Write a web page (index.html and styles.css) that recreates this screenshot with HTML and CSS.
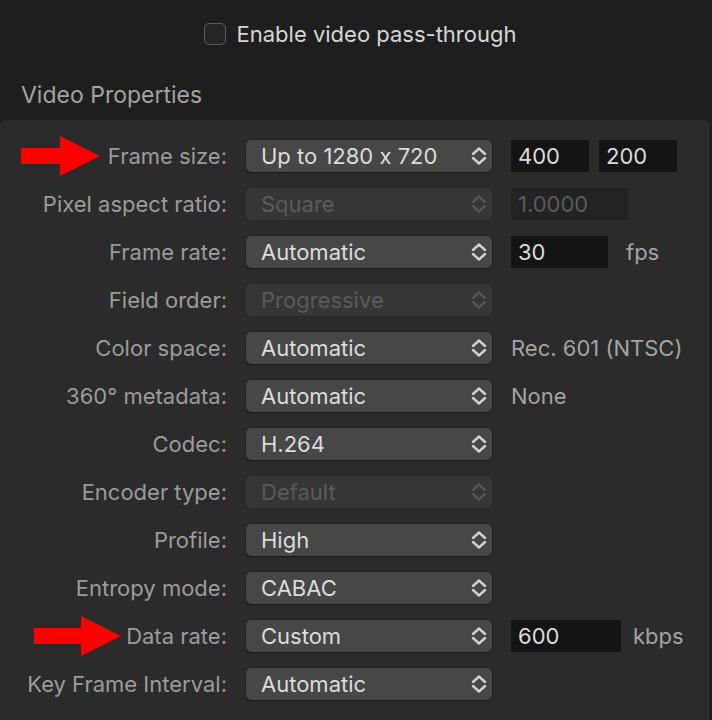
FILE: index.html
```html
<!DOCTYPE html>
<html lang="en">
<head>
  <meta charset="UTF-8">
  <title>Video Properties</title>
  <link rel="stylesheet" href="styles.css">
</head>
<body>
  <div class="passthrough">
    <span class="checkbox"></span>
    <span class="passthrough-label">Enable video pass-through</span>
  </div>
  <div class="section-title">Video Properties</div>
  <div class="panel">
    <div class="form">
      <div class="label">
        <svg class="arrow arrow-frame" width="80" height="40" viewBox="0 0 80 40"><path d="M0 12 H39 V0 L79 20 L39 40 V28 H0 Z" fill="#ff0000"/></svg>
        Frame size:
      </div>
      <div class="popup">Up to 1280 x 720<svg class="chev" width="16" height="20" viewBox="0 0 16 20"><path d="M2 8 L8 2.5 L14 8 M2 12 L8 17.5 L14 12" fill="none" stroke="currentColor" stroke-width="2.4" stroke-linecap="round" stroke-linejoin="round"/></svg></div>
      <div class="extra"><span class="field w78">400</span><span class="field w78">200</span></div>

      <div class="label">Pixel aspect ratio:</div>
      <div class="popup disabled">Square<svg class="chev" width="16" height="20" viewBox="0 0 16 20"><path d="M2 8 L8 2.5 L14 8 M2 12 L8 17.5 L14 12" fill="none" stroke="currentColor" stroke-width="2.4" stroke-linecap="round" stroke-linejoin="round"/></svg></div>
      <div class="extra"><span class="field disabled w117">1.0000</span></div>

      <div class="label">Frame rate:</div>
      <div class="popup">Automatic<svg class="chev" width="16" height="20" viewBox="0 0 16 20"><path d="M2 8 L8 2.5 L14 8 M2 12 L8 17.5 L14 12" fill="none" stroke="currentColor" stroke-width="2.4" stroke-linecap="round" stroke-linejoin="round"/></svg></div>
      <div class="extra"><span class="field w97">30</span><span class="unit fps">fps</span></div>

      <div class="label">Field order:</div>
      <div class="popup disabled">Progressive<svg class="chev" width="16" height="20" viewBox="0 0 16 20"><path d="M2 8 L8 2.5 L14 8 M2 12 L8 17.5 L14 12" fill="none" stroke="currentColor" stroke-width="2.4" stroke-linecap="round" stroke-linejoin="round"/></svg></div>
      <div class="extra"></div>

      <div class="label">Color space:</div>
      <div class="popup">Automatic<svg class="chev" width="16" height="20" viewBox="0 0 16 20"><path d="M2 8 L8 2.5 L14 8 M2 12 L8 17.5 L14 12" fill="none" stroke="currentColor" stroke-width="2.4" stroke-linecap="round" stroke-linejoin="round"/></svg></div>
      <div class="extra"><span class="note">Rec. 601 (NTSC)</span></div>

      <div class="label">360° metadata:</div>
      <div class="popup">Automatic<svg class="chev" width="16" height="20" viewBox="0 0 16 20"><path d="M2 8 L8 2.5 L14 8 M2 12 L8 17.5 L14 12" fill="none" stroke="currentColor" stroke-width="2.4" stroke-linecap="round" stroke-linejoin="round"/></svg></div>
      <div class="extra"><span class="note">None</span></div>

      <div class="label">Codec:</div>
      <div class="popup">H.264<svg class="chev" width="16" height="20" viewBox="0 0 16 20"><path d="M2 8 L8 2.5 L14 8 M2 12 L8 17.5 L14 12" fill="none" stroke="currentColor" stroke-width="2.4" stroke-linecap="round" stroke-linejoin="round"/></svg></div>
      <div class="extra"></div>

      <div class="label">Encoder type:</div>
      <div class="popup disabled">Default<svg class="chev" width="16" height="20" viewBox="0 0 16 20"><path d="M2 8 L8 2.5 L14 8 M2 12 L8 17.5 L14 12" fill="none" stroke="currentColor" stroke-width="2.4" stroke-linecap="round" stroke-linejoin="round"/></svg></div>
      <div class="extra"></div>

      <div class="label">Profile:</div>
      <div class="popup">High<svg class="chev" width="16" height="20" viewBox="0 0 16 20"><path d="M2 8 L8 2.5 L14 8 M2 12 L8 17.5 L14 12" fill="none" stroke="currentColor" stroke-width="2.4" stroke-linecap="round" stroke-linejoin="round"/></svg></div>
      <div class="extra"></div>

      <div class="label">Entropy mode:</div>
      <div class="popup">CABAC<svg class="chev" width="16" height="20" viewBox="0 0 16 20"><path d="M2 8 L8 2.5 L14 8 M2 12 L8 17.5 L14 12" fill="none" stroke="currentColor" stroke-width="2.4" stroke-linecap="round" stroke-linejoin="round"/></svg></div>
      <div class="extra"></div>

      <div class="label">
        <svg class="arrow arrow-rate" width="87" height="40" viewBox="0 0 87 40"><path d="M0 12 H47 V0 L87 20 L47 40 V28 H0 Z" fill="#ff0000"/></svg>
        Data rate:
      </div>
      <div class="popup">Custom<svg class="chev" width="16" height="20" viewBox="0 0 16 20"><path d="M2 8 L8 2.5 L14 8 M2 12 L8 17.5 L14 12" fill="none" stroke="currentColor" stroke-width="2.4" stroke-linecap="round" stroke-linejoin="round"/></svg></div>
      <div class="extra"><span class="field w110">600</span><span class="unit kbps">kbps</span></div>

      <div class="label">Key Frame Interval:</div>
      <div class="popup">Automatic<svg class="chev" width="16" height="20" viewBox="0 0 16 20"><path d="M2 8 L8 2.5 L14 8 M2 12 L8 17.5 L14 12" fill="none" stroke="currentColor" stroke-width="2.4" stroke-linecap="round" stroke-linejoin="round"/></svg></div>
      <div class="extra"></div>
    </div>
  </div>
</body>
</html>
```
FILE: styles.css
```css
body {
  margin: 0;
  background-color: #1e1e1e;
  font-family: Inter, "Noto Sans", sans-serif;
  font-size: 22px;
  font-feature-settings: "calt" 0;
  color: #dcdcdc;
  height: 720px;
  overflow: hidden;
}
.passthrough {
  display: flex;
  justify-content: center;
  align-items: center;
  gap: 11px;
  height: 46px;
  padding-top: 11px;
  padding-left: 8px;
}
.checkbox {
  width: 20px;
  height: 20px;
  border: 1.5px solid #5a5a5a;
  border-radius: 5px;
  background: #262626;
}
.passthrough-label {
  color: #d6d6d6;
}
.section-title {
  color: #a3a3a3;
  font-size: 23px;
  padding: 24px 0 0 21px;
  height: 63px;
  box-sizing: border-box;
}
.panel {
  background-color: #2b2b2b;
  border-radius: 6px 6px 0 0;
  width: 708px;
  border-right: 1px solid #363636;
  padding: 20px 0 40px 0;
}
.form {
  display: grid;
  grid-template-columns: 227px 246px 1fr;
  column-gap: 19px;
  row-gap: 16px;
  grid-auto-rows: 32px;
}
.label {
  position: relative;
  text-align: right;
  color: #9b9b9b;
  line-height: 32px;
  white-space: nowrap;
}
.arrow {
  position: absolute;
  top: -4px;
}
.arrow-frame {
  left: 21px;
}
.arrow-rate {
  left: 34px;
}
.popup {
  display: flex;
  align-items: center;
  justify-content: space-between;
  background-color: #474747;
  border-radius: 5px;
  padding: 0 5px 0 15px;
  line-height: 32px;
  color: #dcdcdc;
  box-shadow: 0 0 0 0.5px rgba(0, 0, 0, 0.45), 0 1px 1px rgba(0, 0, 0, 0.35);
}
.popup.disabled {
  background-color: #363636;
  color: #5b5b5b;
  box-shadow: none;
}
.chev {
  color: #cfcfcf;
}
.popup.disabled .chev {
  color: #555;
}
.extra {
  display: flex;
  align-items: center;
  gap: 10px;
}
.field {
  display: block;
  height: 32px;
  line-height: 32px;
  background-color: #141414;
  box-sizing: border-box;
  padding-left: 7px;
  color: #dcdcdc;
}
.field.disabled {
  background-color: #232323;
  color: #5b5b5b;
}
.w78 { width: 78px; }
.w97 { width: 97px; }
.w110 { width: 110px; }
.w117 { width: 117px; }
.unit, .note {
  color: #a3a3a3;
}
.fps { margin-left: 8px; }
.kbps { margin-left: 2px; }
```
